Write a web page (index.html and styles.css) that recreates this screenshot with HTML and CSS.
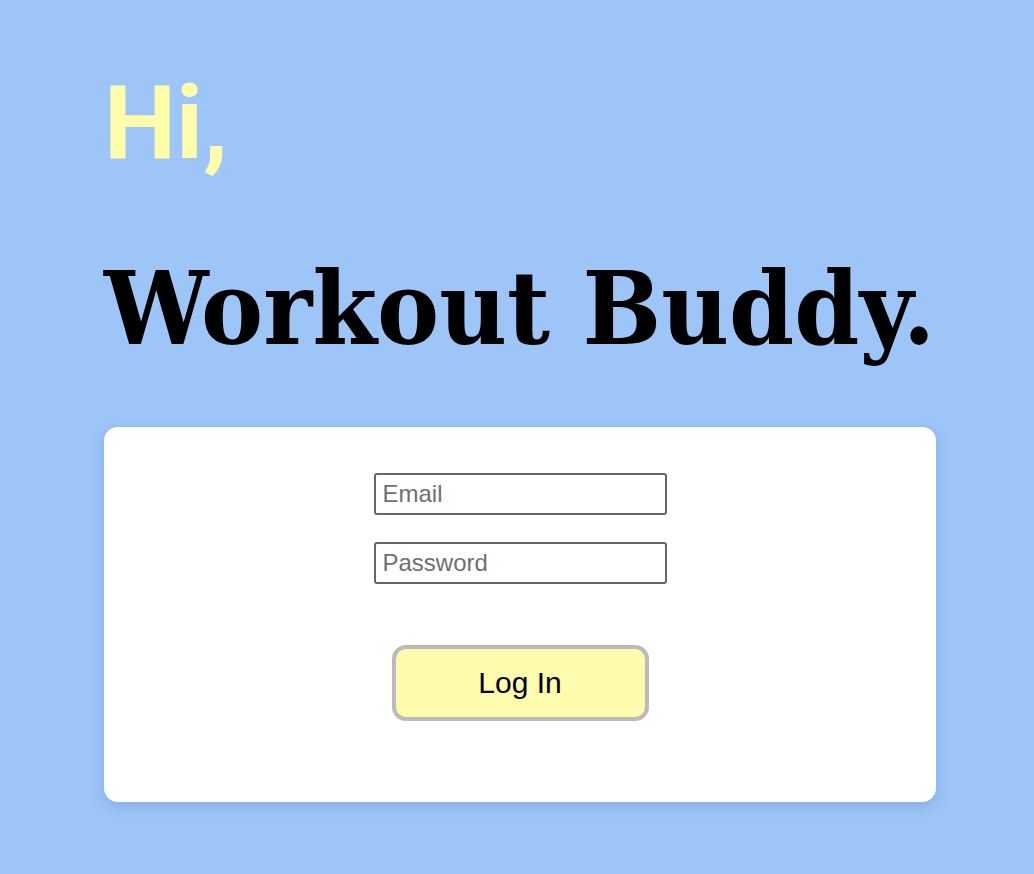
FILE: index.html
```html
<!DOCTYPE html>
<html>
<head>
<meta charset="utf-8">
<link rel="stylesheet" href="styles.css">
</head>
<body>
<main class="page">
  <h1 class="hi">Hi,</h1>
  <h2 class="brand">Workout Buddy.</h2>
  <form class="card">
    <input class="field" type="email" placeholder="Email">
    <input class="field" type="password" placeholder="Password">
    <button class="login" type="button">Log In</button>
  </form>
</main>
</body>
</html>
```
FILE: styles.css
```css
html, body {
  margin: 0;
  padding: 0;
  background: #9ec5f8;
}
body {
  width: 1034px;
  height: 874px;
  overflow: hidden;
}
.page {
  width: 832px;
  margin: 0 0 0 104px;
  padding-top: 58px;
  display: flex;
  flex-direction: column;
}
.hi {
  margin: 0;
  font-family: "Roboto", "Liberation Sans", sans-serif;
  font-weight: 700;
  font-size: 102px;
  line-height: 130px;
  color: #fffcaa;
}
.brand {
  margin: 56px 0 0 0;
  white-space: nowrap;
  font-family: "DejaVu Serif", serif;
  font-weight: 700;
  font-size: 101px;
  line-height: 130px;
  color: #000;
  transform: scaleX(0.923);
  transform-origin: left center;
}
.card {
  margin-top: 53px;
  height: 375px;
  box-sizing: border-box;
  background: #fff;
  border-radius: 14px;
  box-shadow: 0 4px 14px rgba(60, 100, 160, 0.25);
  display: flex;
  flex-direction: column;
  align-items: center;
  padding-top: 46px;
}
.field {
  width: 293px;
  height: 42px;
  box-sizing: border-box;
  margin: 0 0 27px 0;
  padding: 0 7px;
  border: 2px solid #666;
  border-radius: 3px;
  font-family: "Liberation Sans", Arial, sans-serif;
  font-size: 24px;
  color: #333;
}
.field::placeholder {
  color: #6f6f6f;
}
.login {
  margin-top: 34px;
  width: 257px;
  height: 76px;
  box-sizing: border-box;
  background: #fffcae;
  border: 4px solid #bbbbbb;
  border-radius: 14px;
  font-family: "Liberation Sans", Arial, sans-serif;
  font-size: 30px;
  color: #000;
}
```
